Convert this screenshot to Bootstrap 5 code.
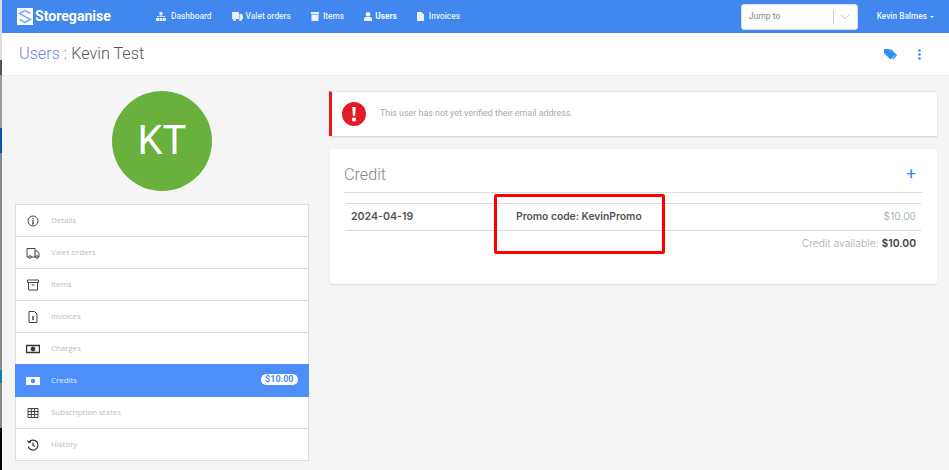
<!DOCTYPE html>
<html lang="en">
<head>
<meta charset="utf-8">
<title>Users : Kevin Test</title>
<link href="https://cdn.jsdelivr.net/npm/bootstrap@5.3.0/dist/css/bootstrap.min.css" rel="stylesheet">
<style>
html,body{height:470px;overflow:hidden}
body{background:#f5f5f5;font-family:Roboto,"Liberation Sans",sans-serif;color:#555}
.backstrip{position:absolute;left:0;top:0;width:2px;height:470px;z-index:5;background:linear-gradient(#ddd 0 60px,#555 60px 75px,#999 75px 128px,#0b54ab 128px 153px,#888 153px 370px,#0a7fb5 370px 383px,#888 383px 428px,#000 428px)}
.topbar{height:33px;background:#4187ee;padding:0 0 0 17px}
.brand{color:#fff;font:700 14.1px/33px Roboto,sans-serif;width:139px;text-decoration:none}
.brand svg{margin-right:2px}
.toplink{color:#f1f5fe;font-size:8.4px;font-weight:500;text-decoration:none;display:flex;align-items:center;gap:3px;white-space:nowrap;opacity:.95}
.toplink.on{font-weight:700;color:#fff}
.toplinks{gap:20px}
.jump{width:117px;height:26px;background:#fff;border:1px solid #ddd;border-radius:3px;font-size:8.6px;color:#888;padding-left:7px}
.jump-sep{width:1px;height:14px;background:#ccc;margin-left:auto}
.jump-arrow{width:23px;text-align:center}
.who{color:#f1f5fe;font-size:8.3px;font-weight:500;margin:0 15px 0 19px;white-space:nowrap}
.who i{display:inline-block;border:2.5px solid transparent;border-top-color:#f1f5fe;border-bottom:0;vertical-align:middle;margin-left:1px}
.subhead{height:43px;background:#fff;padding:0 28px 0 19px;border-bottom:1px solid #eee}
.subhead h1{font-size:16.2px;font-weight:300;margin:0;color:#555}
.subhead a{color:#6c7ff0;text-decoration:none}
.subhead svg{display:block}
.headtools{gap:21px}
.content{padding:15px 12px 0 15px}
.leftcol{width:294px;flex:none}
.avatar{width:100px;height:100px;border-radius:50%;background:#6ab03c;color:#fff;font-size:40px;margin:0 0 13px 97px}
.sidelist{border:1px solid #ddd;border-radius:0;background:#fff}
.siderow{height:32px;padding:0 10px 0 10px;border-bottom:1px solid #ddd;font-size:7.9px;color:#bcbcc4;font-family:"Open Sans",Roboto,sans-serif;background:#fff}
.siderow:last-child{border-bottom:0;height:31px}
.siderow.on{background:#4c8ffb;color:#e9f0ff;margin:-1px -1px 0;padding:0 11px 0 11px;height:33px;border-bottom:0}
.siderow .ic{width:14px;height:14px;margin-right:11px;flex:none;display:block}
.pillv{background:#fff;color:#4c8ffb;font:700 9px/11.5px Roboto,sans-serif;border-radius:6px;padding:0 4.5px;margin-left:auto;margin-top:-2px}
.maincol{margin-left:20px;flex:1;min-width:0;position:relative}
.notice{height:45px;background:#fff;border-left:3px solid #e31b23;box-shadow:0 1px 2px rgba(0,0,0,.15);border-top:1px solid #e5e5e5;font-size:8.9px;color:#aaa;padding-left:10px}
.notice svg{margin-right:14px}
.panel{margin:13px 0 0 1px;height:135px;background:#fff;border-radius:3px;box-shadow:0 1px 2px rgba(0,0,0,.1);padding:13px 14px 0}
.panelhead{height:31px;padding-top:1px;border-bottom:1px solid #ddd;font-size:16.2px;font-weight:300;color:#888}
.plus{color:#2f8cf5;font-size:17px;font-weight:400;margin:2px 7px 0 0;line-height:1}
.creditrow{margin:10px 2px 0;height:28px;border-top:1px solid #ddd;border-bottom:1px solid #ddd;font-family:Inter,Roboto,sans-serif;font-size:10.3px;padding:0 5px;color:#555;font-weight:600}
.cdate{width:165px;font-weight:600;font-size:10.6px;color:#555}
.camt{margin-left:auto;font-weight:400;color:#a9b7b7;font-size:10.2px}
.ctotal{margin:5px 7px 0 0;font-size:10.4px;color:#aaa;font-weight:300;font-family:Inter,sans-serif}
.ctotal b{color:#444;font-weight:600}
.redframe{position:absolute;left:165px;top:103px;width:171px;height:60px;border:3px solid #f00;border-radius:2px;pointer-events:none}
</style>
</head>
<body>
<div class="backstrip"></div>
<nav class="topbar d-flex align-items-center">
  <a class="brand d-flex align-items-center" href="#">
    <svg width="16" height="17" viewBox="0 0 16 17"><rect width="16" height="17" fill="#fff"/><path d="M8 2.500 2.500 5.500l11 6L8 14.500l-5.500-3M8 2.500l5.500 3" fill="none" stroke="#7fb0f5" stroke-width="1.600"/></svg>Storeganise</a>
  <div class="toplinks d-flex align-items-center">
    <a class="toplink" href="#"><svg width="12" height="9" viewBox="0 0 12 9" fill="#f1f5fe"><path d="M3.500 0h3v3h-3zM0 6h3v3H0zM3.500 6h3v3h-3zM7 6h3v3H7zM1 5V4h3.500V3h1v1H9v1H8V4.800H5.500V5h-1v-.2H2V5z"/></svg>Dashboard</a>
    <a class="toplink" href="#"><svg width="11" height="9" viewBox="0 0 11 9" fill="#f1f5fe"><path d="M0 0h7v7H0zM7.500 2H10l1 2v3H7.500z"/><circle cx="2.500" cy="7.500" r="1.500"/><circle cx="8.500" cy="7.500" r="1.500"/></svg>Valet orders</a>
    <a class="toplink" href="#"><svg width="9" height="9" viewBox="0 0 9 9" fill="#f1f5fe"><path d="M0 0h8v2H0zM.5 2.600h7V9h-7z"/></svg>Items</a>
    <a class="toplink on" href="#"><svg width="8" height="9" viewBox="0 0 8 9" fill="#fff"><circle cx="4" cy="2.300" r="2.300"/><path d="M0 9V7q0-2 2-2h4q2 0 2 2v2z"/></svg>Users</a>
    <a class="toplink" href="#"><svg width="9" height="9" viewBox="0 0 9 9" fill="#f1f5fe"><path d="M0 0h4.500L7 2.500V9H0z"/></svg>Invoices</a>
  </div>
  <div class="jump d-flex align-items-center ms-auto">Jump to<span class="jump-sep"></span><span class="jump-arrow"><svg width="10" height="6" viewBox="0 0 10 6"><path d="m1 1 4 4 4-4" fill="none" stroke="#ccc"/></svg></span></div>
  <div class="who">Kevin Balmes <i></i></div>
</nav>
<header class="subhead d-flex align-items-center justify-content-between">
  <h1><a href="#">Users</a> <span class="text-secondary">:</span> Kevin Test</h1>
  <div class="headtools d-flex align-items-center">
    <svg width="13" height="11" viewBox="0 0 13 11" fill="#2f8cf5"><path d="M0 0h5l6 6-4.500 4.500L0 4z"/><path d="m7 0 5.500 5.500a1 1 0 0 1 0 1.400L9 10.500l-.8-.8L11 6.500 6 1z"/></svg>
    <svg width="3" height="11" viewBox="0 0 3 11" fill="#2f8cf5"><circle cx="1.500" cy="1.500" r="1.300"/><circle cx="1.500" cy="5.500" r="1.300"/><circle cx="1.500" cy="9.500" r="1.300"/></svg>
  </div>
</header>
<main class="content d-flex">
  <aside class="leftcol">
    <div class="avatar d-flex align-items-center justify-content-center">KT</div>
    <div class="sidelist">
      <div class="siderow d-flex align-items-center"><svg class="ic" viewBox="0 0 14 14" fill="none" stroke="#444"><circle cx="7" cy="7" r="5"/><path d="M7 6v4M6 10h2M7 4v1" stroke-width="1.200"/></svg>Details</div>
      <div class="siderow d-flex align-items-center"><svg class="ic" viewBox="0 0 14 14" fill="none" stroke="#444"><path d="M3 11H1V2.500h8V11H5M9 5h2.500L13 7.500V11h-1M9 11h1"/><circle cx="4" cy="11" r="1.300"/><circle cx="11" cy="11" r="1.300"/></svg>Valet orders</div>
      <div class="siderow d-flex align-items-center"><svg class="ic" viewBox="0 0 14 14" fill="none" stroke="#444"><path d="M1.500 2h11v2.500h-11zM2.500 4.500V12h9V4.500M5.500 7h3"/></svg>Items</div>
      <div class="siderow d-flex align-items-center"><svg class="ic" viewBox="0 0 14 14" fill="none" stroke="#444"><path d="M3 1.500h5.500L11 4v8.500H3zM7 6v4M6 7h2M6 9h2"/></svg>Invoices</div>
      <div class="siderow d-flex align-items-center"><svg class="ic" viewBox="0 0 14 14" fill="none" stroke="#333"><path d="M.5 3.500h13v7H.500z" stroke-width="1.400"/><circle cx="7" cy="7" r="2" fill="#333"/></svg>Charges</div>
      <div class="siderow on d-flex align-items-center"><svg class="ic" viewBox="0 0 14 14" fill="#fff"><path fill-rule="evenodd" d="M0 3h14v8H0zM7 4.800a2.200 2.200 0 1 0 0 4.400 2.200 2.200 0 0 0 0-4.400z"/></svg>Credits<span class="pillv">$10.00</span></div>
      <div class="siderow d-flex align-items-center"><svg class="ic" viewBox="0 0 14 14" fill="none" stroke="#444"><path d="M2 2.500h10v9H2zM2 5.500h10M2 8.500h10M5.300 2.500v9M8.700 2.500v9"/></svg>Subscription states</div>
      <div class="siderow d-flex align-items-center"><svg class="ic" viewBox="0 0 14 14" fill="none" stroke="#333"><path d="M3 4a5 5 0 1 1-.8 4.500M1.500 2.500 3 4.500l2-.5M7 4.500V7.500l2 1" stroke-width="1.200"/></svg>History</div>
    </div>
  </aside>
  <section class="maincol">
    <div class="notice d-flex align-items-center">
      <svg width="24" height="24" viewBox="0 0 24 24"><circle cx="12" cy="12" r="12" fill="#e31b23"/><path d="M10.300 5h3.400l-.6 9h-2.200zM10.200 15.800h3.600v3.400h-3.600z" fill="#fff"/></svg>
      This user has not yet verified their email address.
    </div>
    <div class="panel">
      <div class="panelhead d-flex align-items-start justify-content-between">Credit<span class="plus">+</span></div>
      <div class="creditrow d-flex align-items-center"><span class="cdate">2024-04-19</span><span>Promo code: KevinPromo</span><span class="camt">$10.00</span></div>
      <div class="ctotal text-end">Credit available: <b>$10.00</b></div>
    </div>
    <div class="redframe"></div>
  </section>
</main>
<script src="https://cdn.jsdelivr.net/npm/bootstrap@5.3.0/dist/js/bootstrap.bundle.min.js"></script>
</body>
</html>
